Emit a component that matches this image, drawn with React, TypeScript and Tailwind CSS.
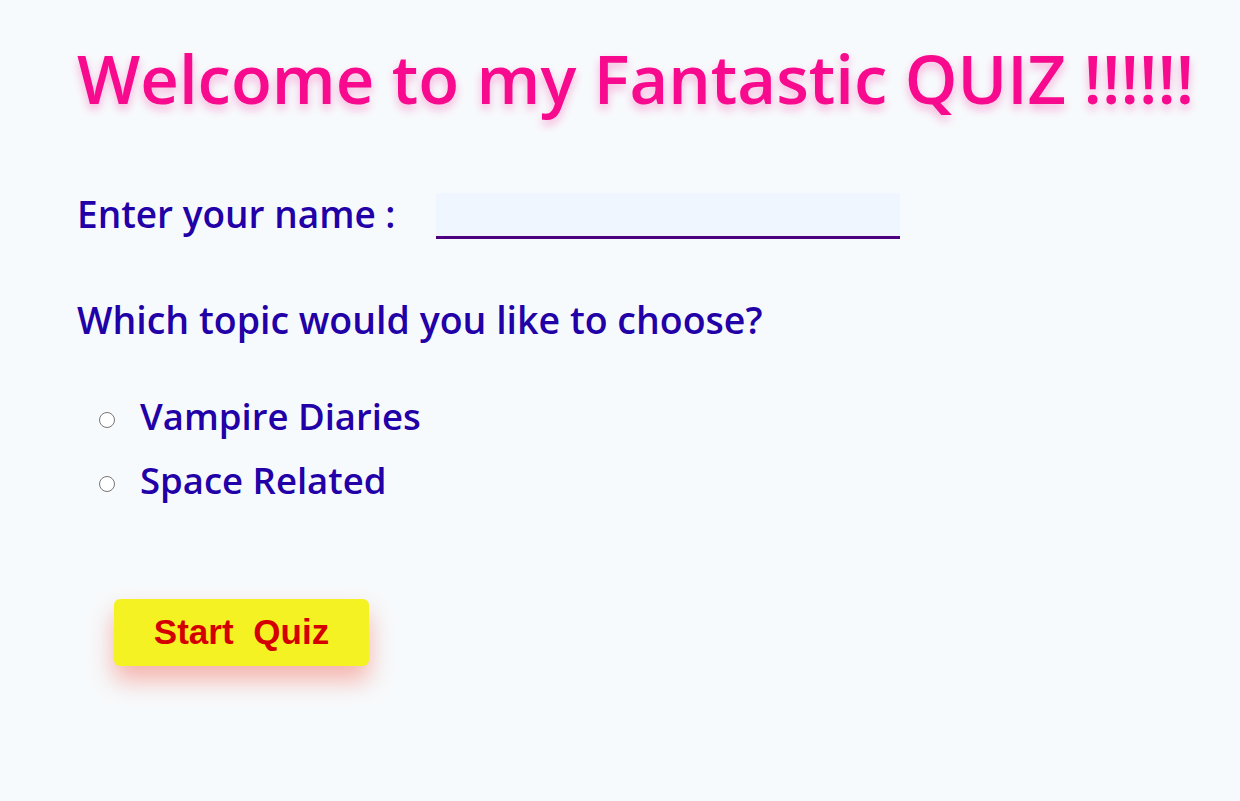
export default function App() {
  const font = { fontFamily: '"Trebuchet MS", "Open Sans", sans-serif' };
  return (
    <div className="min-h-[801px] bg-[#f7fafc] pl-[77px] pt-[36px]" style={font}>
      <h1 className="text-[67px] font-semibold leading-[84px] text-[#f70a8d] [text-shadow:0_5px_10px_rgba(247,10,141,0.3)]">
        Welcome to my Fantastic QUIZ !!!!!!
      </h1>
      <div className="mt-[71px] flex items-end">
        <label className="mb-[2px] text-[37px] font-semibold leading-[46px] text-[#2200a8]">Enter your name :</label>
        <input className="ml-[40px] h-[46px] w-[464px] border-b-[3px] border-[#4b0082] bg-[#eff6ff] outline-none" />
      </div>
      <p className="mt-[58px] text-[37.5px] font-semibold leading-[46px] text-[#2200a8]">
        Which topic would you like to choose?
      </p>
      <div className="mt-[50px] flex flex-col gap-[18px] pl-[22px]">
        {["Vampire Diaries", "Space Related"].map((t) => (
          <label key={t} className="flex items-center text-[36.5px] font-semibold leading-[46px] text-[#2200a8]">
            <input type="radio" name="topic" className="mt-[8px] h-[16px] w-[16px]" />
            <span className="ml-[25px]">{t}</span>
          </label>
        ))}
      </div>
      <button
        className="ml-[37px] mt-[96px] h-[67px] w-[255px] rounded-[6px] bg-[#f4f222] text-[35px] font-bold text-[#d40000] [word-spacing:10px] shadow-[0_14px_24px_rgba(245,90,70,0.45)]"
        style={{ fontFamily: '"Liberation Sans", Arial, sans-serif' }}
      >
        Start Quiz
      </button>
    </div>
  );
}
